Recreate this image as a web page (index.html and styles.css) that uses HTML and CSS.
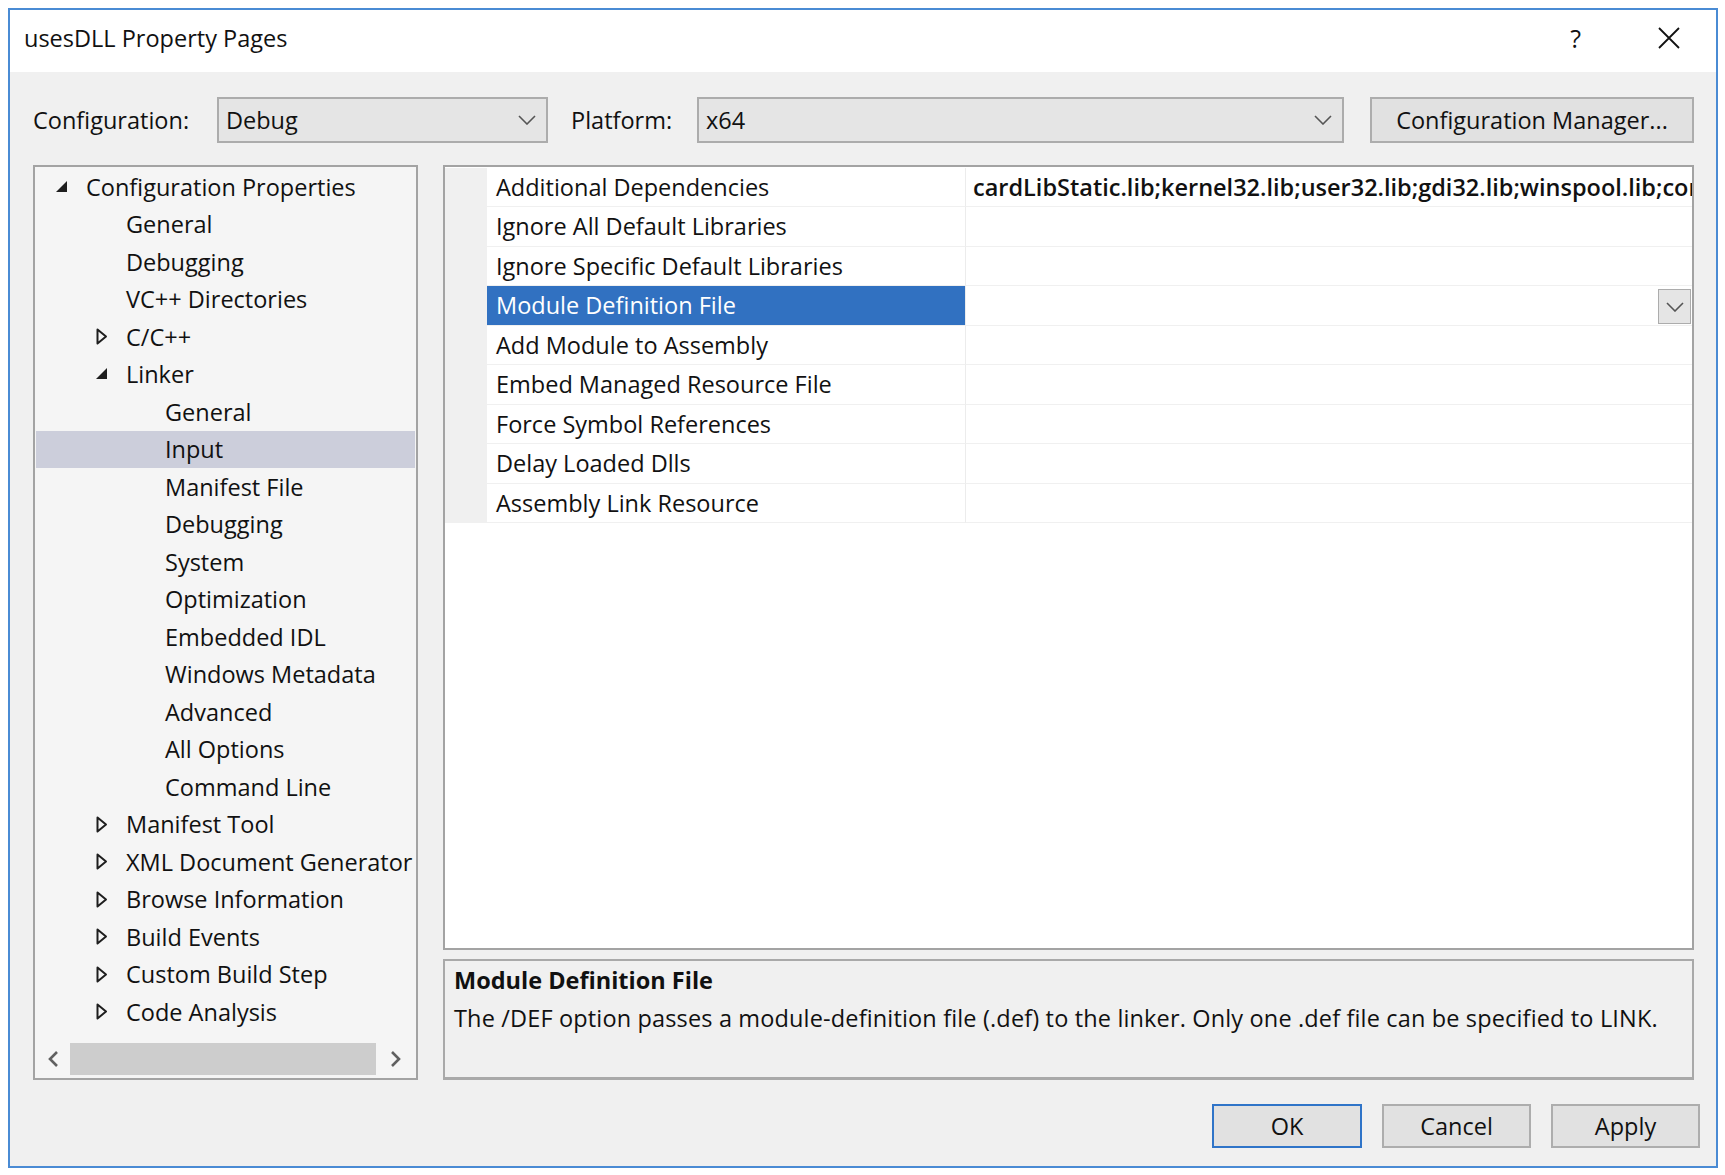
FILE: index.html
```html
<!DOCTYPE html>
<html lang="en">
<head>
    <meta charset="UTF-8">
    <title>usesDLL Property Pages</title>
    <link rel="stylesheet" href="styles.css">
</head>
<body>
    <div class="window">
        <div class="titlebar">
            <span class="title">usesDLL Property Pages</span>
            <span class="help">?</span>
            <svg class="close" width="22" height="22" viewBox="0 0 22 22">
                <path d="M1 1L21 21M21 1L1 21" />
            </svg>
        </div>

        <div class="content">
            <div class="config-row">
                <span class="lbl lbl-config">Configuration:</span>
                <div class="combo combo-config">
                    <span>Debug</span>
                    <svg class="chev" width="18" height="10" viewBox="0 0 18 10"><path d="M1 1L9 9L17 1" /></svg>
                </div>
                <span class="lbl lbl-platform">Platform:</span>
                <div class="combo combo-platform">
                    <span>x64</span>
                    <svg class="chev" width="18" height="10" viewBox="0 0 18 10"><path d="M1 1L9 9L17 1" /></svg>
                </div>
                <button class="btn btn-manager">Configuration Manager...</button>
            </div>

            <div class="main">
                <div class="tree">
                    <ul class="tree-list">
                        <li class="lvl0"><span class="twisty"><svg width="12" height="12" viewBox="0 0 12 12"><path class="open" d="M11 0V11H0Z" /></svg></span>Configuration Properties</li>
                        <li class="lvl1"><span class="twisty"></span>General</li>
                        <li class="lvl1"><span class="twisty"></span>Debugging</li>
                        <li class="lvl1"><span class="twisty"></span>VC++ Directories</li>
                        <li class="lvl1"><span class="twisty"><svg width="12" height="17" viewBox="0 0 12 17"><path class="shut" d="M1.5 1.5L10 8.5L1.5 15.5Z" /></svg></span>C/C++</li>
                        <li class="lvl1"><span class="twisty"><svg width="12" height="12" viewBox="0 0 12 12"><path class="open" d="M11 0V11H0Z" /></svg></span>Linker</li>
                        <li class="lvl2"><span class="twisty"></span>General</li>
                        <li class="lvl2 selected"><span class="twisty"></span>Input</li>
                        <li class="lvl2"><span class="twisty"></span>Manifest File</li>
                        <li class="lvl2"><span class="twisty"></span>Debugging</li>
                        <li class="lvl2"><span class="twisty"></span>System</li>
                        <li class="lvl2"><span class="twisty"></span>Optimization</li>
                        <li class="lvl2"><span class="twisty"></span>Embedded IDL</li>
                        <li class="lvl2"><span class="twisty"></span>Windows Metadata</li>
                        <li class="lvl2"><span class="twisty"></span>Advanced</li>
                        <li class="lvl2"><span class="twisty"></span>All Options</li>
                        <li class="lvl2"><span class="twisty"></span>Command Line</li>
                        <li class="lvl1"><span class="twisty"><svg width="12" height="17" viewBox="0 0 12 17"><path class="shut" d="M1.5 1.5L10 8.5L1.5 15.5Z" /></svg></span>Manifest Tool</li>
                        <li class="lvl1"><span class="twisty"><svg width="12" height="17" viewBox="0 0 12 17"><path class="shut" d="M1.5 1.5L10 8.5L1.5 15.5Z" /></svg></span>XML Document Generator</li>
                        <li class="lvl1"><span class="twisty"><svg width="12" height="17" viewBox="0 0 12 17"><path class="shut" d="M1.5 1.5L10 8.5L1.5 15.5Z" /></svg></span>Browse Information</li>
                        <li class="lvl1"><span class="twisty"><svg width="12" height="17" viewBox="0 0 12 17"><path class="shut" d="M1.5 1.5L10 8.5L1.5 15.5Z" /></svg></span>Build Events</li>
                        <li class="lvl1"><span class="twisty"><svg width="12" height="17" viewBox="0 0 12 17"><path class="shut" d="M1.5 1.5L10 8.5L1.5 15.5Z" /></svg></span>Custom Build Step</li>
                        <li class="lvl1"><span class="twisty"><svg width="12" height="17" viewBox="0 0 12 17"><path class="shut" d="M1.5 1.5L10 8.5L1.5 15.5Z" /></svg></span>Code Analysis</li>
                    </ul>

                    <div class="hscroll">
                        <span class="arrow"><svg width="12" height="18" viewBox="0 0 12 18"><path d="M10 2L3 9L10 16" /></svg></span>
                        <div class="thumb"></div>
                        <span class="arrow"><svg width="12" height="18" viewBox="0 0 12 18"><path d="M2 2L9 9L2 16" /></svg></span>
                    </div>
                </div>

                <div class="right">
                    <div class="grid">
                        <div class="row">
                            <div class="gutter"></div>
                            <div class="name">Additional Dependencies</div>
                            <div class="value bold">cardLibStatic.lib;kernel32.lib;user32.lib;gdi32.lib;winspool.lib;comdlg32.lib;advapi32.lib;shell32.lib</div>
                        </div>
                        <div class="row">
                            <div class="gutter"></div>
                            <div class="name">Ignore All Default Libraries</div>
                            <div class="value"></div>
                        </div>
                        <div class="row">
                            <div class="gutter"></div>
                            <div class="name">Ignore Specific Default Libraries</div>
                            <div class="value"></div>
                        </div>
                        <div class="row active">
                            <div class="gutter"></div>
                            <div class="name">Module Definition File</div>
                            <div class="value">
                                <span class="drop"><svg width="18" height="10" viewBox="0 0 18 10"><path d="M1 1L9 9L17 1" /></svg></span>
                            </div>
                        </div>
                        <div class="row">
                            <div class="gutter"></div>
                            <div class="name">Add Module to Assembly</div>
                            <div class="value"></div>
                        </div>
                        <div class="row">
                            <div class="gutter"></div>
                            <div class="name">Embed Managed Resource File</div>
                            <div class="value"></div>
                        </div>
                        <div class="row">
                            <div class="gutter"></div>
                            <div class="name">Force Symbol References</div>
                            <div class="value"></div>
                        </div>
                        <div class="row">
                            <div class="gutter"></div>
                            <div class="name">Delay Loaded Dlls</div>
                            <div class="value"></div>
                        </div>
                        <div class="row">
                            <div class="gutter"></div>
                            <div class="name">Assembly Link Resource</div>
                            <div class="value"></div>
                        </div>
                    </div>

                    <div class="desc">
                        <div class="desc-title">Module Definition File</div>
                        <div class="desc-text">The /DEF option passes a module-definition file (.def) to the linker. Only one .def file can be specified to LINK.</div>
                    </div>
                </div>
            </div>

            <div class="buttons">
                <button class="btn btn-ok">OK</button>
                <button class="btn">Cancel</button>
                <button class="btn">Apply</button>
            </div>
        </div>
    </div>
</body>
</html>
```

FILE: styles.css
```css
* {
    margin: 0;
    padding: 0;
    box-sizing: border-box;
}

body {
    font-family: "Open Sans", "Noto Sans", sans-serif;
    font-size: 23.5px;
    color: #111111;
    background: #ffffff;
}

.window {
    width: 1710px;
    height: 1160px;
    margin: 8px 0 0 8px;
    border: 2px solid #4a8bd4;
    background: #f0f0f0;
    display: flex;
    flex-direction: column;
}

/* title bar */
.titlebar {
    height: 62px;
    background: #ffffff;
    display: flex;
    align-items: center;
    padding: 0 36px 6px 14px;
}

.title {
    flex: 1;
}

.help {
    font-size: 25px;
    margin-right: 77px;
}

.close path {
    stroke: #111111;
    stroke-width: 1.8;
    fill: none;
}

/* configuration row */
.content {
    flex: 1;
    display: flex;
    flex-direction: column;
    padding: 25px 22px 0 23px;
}

.config-row {
    display: flex;
    align-items: center;
    height: 46px;
}

.lbl-config {
    width: 184px;
}

.lbl-platform {
    width: 126px;
    margin-left: 23px;
}

.combo {
    height: 46px;
    background: #e5e5e5;
    border: 2px solid #acacac;
    display: flex;
    align-items: center;
    justify-content: space-between;
    padding: 0 10px 0 7px;
}

.combo-config {
    width: 331px;
}

.combo-platform {
    width: 647px;
}

.chev path,
.drop path {
    stroke: #555555;
    stroke-width: 1.6;
    fill: none;
}

.btn {
    font-family: inherit;
    font-size: 23.5px;
    color: #111111;
    background: #e1e1e1;
    border: 2px solid #adadad;
    height: 46px;
    width: 149px;
}

.btn-manager {
    width: 324px;
    margin-left: 26px;
}

/* tree + grid */
.main {
    display: flex;
    margin-top: 22px;
    gap: 25px;
    height: 915px;
}

.tree {
    width: 385px;
    background: #f5f5f5;
    border: 2px solid #a3a3a3;
    display: flex;
    flex-direction: column;
    overflow: hidden;
}

.tree-list {
    list-style: none;
    padding-top: 1px;
}

.tree-list li {
    height: 37.5px;
    display: flex;
    align-items: center;
    white-space: nowrap;
}

.tree-list li.selected {
    background: #cccedb;
    margin: 0 1px;
}

.lvl0 { padding-left: 21px; }
.lvl1 { padding-left: 61px; }
.lvl2 { padding-left: 100px; }
.lvl2.selected { padding-left: 99px; }

.twisty {
    width: 30px;
    flex-shrink: 0;
    display: flex;
    align-items: center;
}

.twisty .open {
    fill: #1e1e1e;
}

.twisty .shut {
    fill: none;
    stroke: #1e1e1e;
    stroke-width: 2;
    stroke-linejoin: round;
}

.hscroll {
    margin-top: auto;
    margin-bottom: 3px;
    height: 32px;
    display: flex;
    align-items: center;
}

.hscroll .arrow {
    width: 35px;
    display: flex;
    justify-content: center;
}

.hscroll .arrow path {
    stroke: #606060;
    stroke-width: 2.6;
    fill: none;
}

.hscroll .thumb {
    width: 306px;
    height: 32px;
    background: #cdcdcd;
}

.hscroll .arrow:last-child {
    width: 40px;
}

.right {
    width: 1251px;
    display: flex;
    flex-direction: column;
    gap: 9px;
}

.grid {
    height: 785px;
    background: #ffffff;
    border: 2px solid #a3a3a3;
    padding-top: 0.5px;
}

.row {
    display: flex;
    height: 39.5px;
}

.gutter {
    width: 42px;
    background: #f0f0f0;
}

.name {
    width: 478px;
    padding-left: 9px;
    display: flex;
    align-items: center;
    border-bottom: 1px solid #f0f0f0;
    white-space: nowrap;
}

.value {
    flex: 1;
    min-width: 0;
    padding-left: 7px;
    display: flex;
    align-items: center;
    border-left: 1px solid #ececec;
    border-bottom: 1px solid #f0f0f0;
    white-space: nowrap;
    overflow: hidden;
}

.bold {
    font-weight: 600;
}

.row.active .name {
    background: #3171c1;
    color: #ffffff;
}

.row.active .value {
    justify-content: flex-end;
    padding-right: 1px;
}

.drop {
    width: 33px;
    height: 35px;
    margin-top: 3px;
    background: #e5e5e5;
    border: 1px solid #acacac;
    display: flex;
    align-items: center;
    justify-content: center;
}

.desc {
    height: 121px;
    background: #f0f0f0;
    border: 2px solid #a9a9a9;
    border-bottom-width: 3px;
    padding: 0 9px;
}

.desc-title {
    font-weight: 700;
    line-height: 38px;
}

.desc-text {
    line-height: 38px;
    letter-spacing: 0.15px;
}

/* dialog buttons */
.buttons {
    display: flex;
    justify-content: flex-end;
    gap: 20px;
    margin-top: 24px;
    margin-right: -6px;
}

.buttons .btn {
    height: 44px;
}

.btn-ok {
    width: 150px;
    border-color: #2f74c8;
}
```
